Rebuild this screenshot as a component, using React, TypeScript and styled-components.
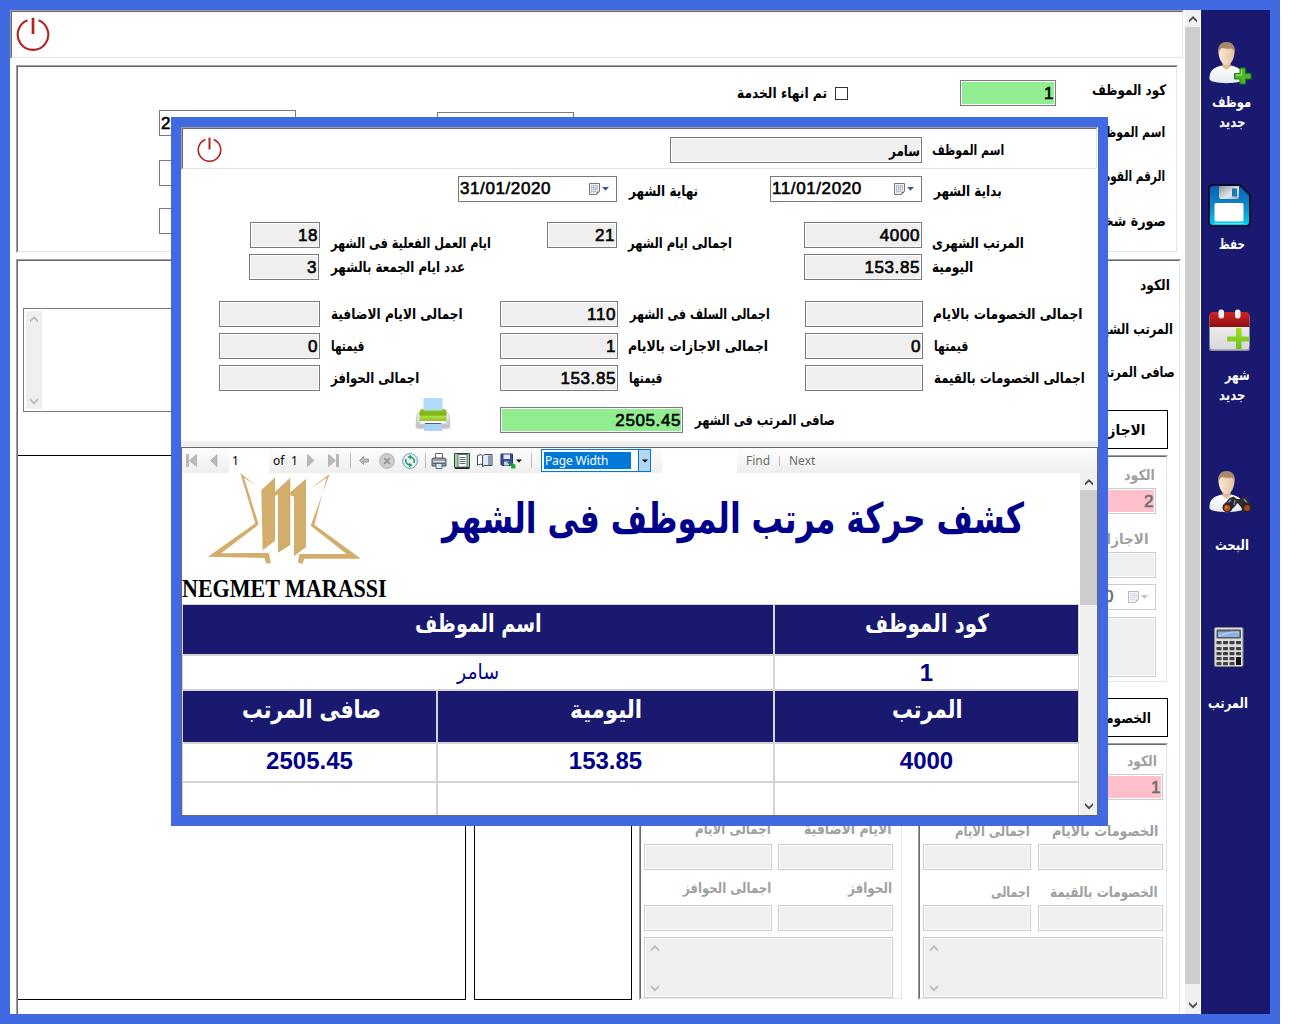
import React, { useLayoutEffect, useRef, useState } from "react";
import styled, { createGlobalStyle, css } from "styled-components";

const ARABIC = '"DejaVu Sans Condensed", "DejaVu Sans", sans-serif';
const LATIN = '"Liberation Sans", "DejaVu Sans", sans-serif';
const ROYAL = "#4169e1";
const NAVY = "#191970";

const Global = createGlobalStyle`
  * { box-sizing: border-box; }
  body { margin: 0; background: #fff; overflow: hidden; font-family: ${LATIN}; }
  svg { display: block; flex: none; }
`;

/* ---------- text ---------- */

const TextSlot = styled.div<{ $w: number; $ml?: number; $mr?: number; $dy?: number; $h?: number; $size?: number; $color?: string; $weight?: number; $font?: string }>`
  flex: none;
  width: ${(p) => p.$w}px;
  height: ${(p) => p.$h ?? 24}px;
  margin-left: ${(p) => p.$ml ?? 0}px;
  margin-right: ${(p) => p.$mr ?? 0}px;
  margin-top: ${(p) => (p.$dy ?? 0) * 2}px;
  font: ${(p) => p.$weight ?? 700} ${(p) => p.$size ?? 14.5}px / ${(p) => p.$h ?? 24}px ${(p) => p.$font ?? ARABIC};
  letter-spacing: 0;
  -webkit-text-stroke: 0;
  color: ${(p) => p.$color ?? "#000"};
  text-align: left;
`;

const FitSpan = styled.span`
  display: inline-block;
  white-space: nowrap;
  transform-origin: 0 50%;
`;

type FitProps = { children: string; w: number; ml?: number; mr?: number; dy?: number; h?: number; size?: number; color?: string; weight?: number; font?: string; ltr?: boolean };

function Fit({ children, w, ml, mr, dy, h, size, color, weight, font, ltr }: FitProps) {
  const ref = useRef<HTMLSpanElement>(null);
  const [scale, setScale] = useState(1);
  useLayoutEffect(() => {
    if (ref.current) setScale(w / ref.current.offsetWidth);
  }, [w, children]);
  return (
    <TextSlot $w={w} $ml={ml} $mr={mr} $dy={dy} $h={h} $size={size} $color={color} $weight={weight} $font={font}>
      <FitSpan ref={ref} dir={ltr ? "ltr" : "rtl"} style={{ transform: `scaleX(${scale})` }}>
        {children}
      </FitSpan>
    </TextSlot>
  );
}

/* ---------- layout pieces ---------- */

const Row = styled.div<{ $h?: number; $mt?: number; $pl?: number; $pr?: number; $end?: boolean }>`
  display: flex;
  flex: none;
  align-items: center;
  justify-content: ${(p) => (p.$end ? "flex-end" : "flex-start")};
  height: ${(p) => p.$h ?? 26}px;
  margin-top: ${(p) => p.$mt ?? 0}px;
  padding-left: ${(p) => p.$pl ?? 0}px;
  padding-right: ${(p) => p.$pr ?? 0}px;
`;

const sunken = css`
  border: 1px solid;
  border-color: #a0a0a0 #fff #fff #a0a0a0;
`;

const SunkenOuter = styled.div<{ $w?: number; $h?: number; $ml?: number; $mt?: number; $mr?: number }>`
  ${sunken}
  flex: none;
  display: flex;
  width: ${(p) => (p.$w ? p.$w + "px" : "auto")};
  height: ${(p) => (p.$h ? p.$h + "px" : "auto")};
  margin: ${(p) => p.$mt ?? 0}px ${(p) => p.$mr ?? 0}px 0 ${(p) => p.$ml ?? 0}px;
`;

const SunkenInner = styled.div<{ $dir?: string }>`
  flex: 1;
  min-width: 0;
  display: flex;
  flex-direction: ${(p) => p.$dir ?? "column"};
  border: 1px solid;
  border-color: #696969 #e3e3e3 #e3e3e3 #696969;
`;

type SunkenProps = { w?: number; h?: number; ml?: number; mt?: number; mr?: number; dir?: string; children?: React.ReactNode };
const Sunken = ({ w, h, ml, mt, mr, dir, children }: SunkenProps) => (
  <SunkenOuter $w={w} $h={h} $ml={ml} $mt={mt} $mr={mr}>
    <SunkenInner $dir={dir}>{children}</SunkenInner>
  </SunkenOuter>
);

const tones: Record<string, string> = { grey: "#efefef", green: "#90ee90", pink: "#ffc0cb", white: "#fff" };

const Field = styled.div<{ $w: number; $h?: number; $ml?: number; $tone?: string; $off?: boolean; $left?: boolean }>`
  flex: none;
  display: flex;
  align-items: center;
  justify-content: ${(p) => (p.$left ? "flex-start" : "flex-end")};
  width: ${(p) => p.$w}px;
  height: ${(p) => p.$h ?? 26}px;
  margin-left: ${(p) => p.$ml ?? 0}px;
  padding: 1px 1px 0;
  border: 1px solid ${(p) => (p.$off ? "#cccccc" : "#7a7a7a")};
  box-shadow: inset 0 0 0 1px #fff;
  background: ${(p) => tones[p.$tone ?? "grey"]};
  color: ${(p) => (p.$off ? "#6d6d6d" : "#000")};
  font: 400 17px/24px ${LATIN};
  letter-spacing: 0.6px;
  -webkit-text-stroke: 0.6px currentColor;
`;

const DateField = styled(Field)`
  justify-content: space-between;
  padding: 0 6px 0 1px;
`;

const Calendar = ({ off }: { off?: boolean }) => (
  <svg width="22" height="14" viewBox="0 0 22 14" opacity={off ? 0.5 : 1}>
    <path d="M1.500 1.500h10v8l-3 3h-7z" fill="#f4f4f8" stroke="#7d7478" />
    <path d="M3 3.500h7M3 5.500h7M3 7.500h7M3 9.500h5M3.500 3v8M5.500 3v8M7.500 3v7M9.500 3v5" stroke="#b3b9cc" strokeWidth=".8" />
    <path d="M8.500 12.500l3-3h-3z" fill="#7d7478" />
    <path d="M14 5h7l-3.500 3.700z" fill={off ? "#888880" : "#44598c"} />
  </svg>
);

const DateBox = ({ value, w, ml, off }: { value: string; w: number; ml?: number; off?: boolean }) => (
  <DateField $w={w} $ml={ml} $tone="white" $off={off}>
    <span>{value}</span>
    <Calendar off={off} />
  </DateField>
);

/* ---------- scrollbars ---------- */

const Chevron = ({ down, color = "#505050" }: { down?: boolean; color?: string }) => (
  <svg width="8" height="7" viewBox="0 0 8 7">
    <path d={down ? "M0 0v2.500L4 6.500 8 2.500V0L4 3.800z" : "M0 6.500V4l4-4 4 4v2.500L4 2.700z"} fill={color} />
  </svg>
);

const Track = styled.div<{ $w: number; $bg?: string; $ml?: number; $pad?: string }>`
  flex: none;
  display: flex;
  flex-direction: column;
  align-items: center;
  justify-content: space-between;
  width: ${(p) => p.$w}px;
  margin-left: ${(p) => p.$ml ?? 0}px;
  padding: ${(p) => p.$pad ?? "6px 0 5px"};
  background: ${(p) => p.$bg ?? "#f0f0f0"};
`;

const Thumb = styled.div<{ $h: number }>`
  width: 100%;
  height: ${(p) => p.$h}px;
  margin: 4px 0 auto;
  background: #cdcdcd;
`;

const Memo = styled(Field)<{ $mt?: number }>`
  align-items: stretch;
  justify-content: flex-start;
  margin-top: ${(p) => p.$mt ?? 0}px;
  padding: 2px;
`;

/* ---------- window ---------- */

const Stage = styled.div`
  position: relative;
  width: 1302px;
  height: 1024px;
  overflow: hidden;
  background: #fff;
`;

const Window = styled.div`
  display: flex;
  width: 1280px;
  height: 1024px;
  border: 10px solid ${ROYAL};
`;

const Page = styled.div`
  width: 1175px;
  flex: none;
  overflow: hidden;
  display: flex;
  flex-direction: column;
  background: #fff;
`;

const Sidebar = styled.div`
  width: 69px;
  margin-left: 1px;
  background: ${NAVY};
  display: flex;
  flex-direction: column;
`;

const SideItem = styled.div<{ $mt: number; $pl: number }>`
  display: flex;
  flex-direction: column;
  align-items: flex-start;
  margin-top: ${(p) => p.$mt}px;
  padding-left: ${(p) => p.$pl}px;
`;

const Check = styled.div`
  flex: none;
  width: 13px;
  height: 13px;
  margin-left: 8px;
  border: 1px solid #333;
  background: #fff;
`;

const Columns = styled.div`
  display: flex;
  flex: none;
`;

const Column = styled.div<{ $w: number; $ml?: number }>`
  flex: none;
  display: flex;
  flex-direction: column;
  width: ${(p) => p.$w}px;
  margin-left: ${(p) => p.$ml ?? 0}px;
`;

const ListBox = styled.div<{ $w: number; $ml?: number; $open?: boolean }>`
  width: ${(p) => p.$w}px;
  height: 545px;
  margin-left: ${(p) => p.$ml ?? 0}px;
  border: 1px solid #000;
  border-left-width: ${(p) => (p.$open ? 0 : 1)}px;
`;

const TabBox = styled.div<{ $mt: number; $pr: number }>`
  flex: none;
  display: flex;
  align-items: center;
  justify-content: flex-end;
  height: 39px;
  margin: ${(p) => p.$mt}px 11px 0 100px;
  padding-right: ${(p) => p.$pr}px;
  border: 1px solid #000;
`;

const PowerSvg = styled.svg<{ $ml: number; $mt: number }>`
  margin: ${(p) => p.$mt}px 0 0 ${(p) => p.$ml}px;
`;

const Power = ({ s, sw, ml, mt }: { s: number; sw: number; ml: number; mt: number }) => (
  <PowerSvg width={s} height={s} viewBox="0 0 34 34" $ml={ml} $mt={mt}>
    <path d="M11.500 3.300A15.300 15.300 0 1 0 22.500 3.300" fill="none" stroke="#b22222" strokeWidth={sw} />
    <path d="M17 .8v16.200" stroke="#b22222" strokeWidth={sw + 0.6} />
  </PowerSvg>
);

/* ---------- sidebar drawings ---------- */

const Person = () => (
  <>
    <defs>
      <linearGradient id="skin" x1="0" x2="1"><stop offset="0" stopColor="#fbe9d3" /><stop offset="1" stopColor="#e5c19f" /></linearGradient>
      <linearGradient id="shirt" x1="0" y1="0" x2="0" y2="1"><stop offset="0" stopColor="#fff" /><stop offset="1" stopColor="#e6ebf2" /></linearGradient>
    </defs>
    <path d="M0.500 37c0-8 3-11 12-13.500l5 3 5-3C31 26 35 29 35 37c0 5.500-34.500 5.500-34.500 0z" fill="url(#shirt)" />
    <path d="M13.500 20h8v5l-4 3-4-3z" fill="#dfbd9c" />
    <path d="M9.500 9c0-5 3-8 8-8s8 3 8 8c0 8-3.500 14-8 14s-8-6-8-14z" fill="url(#skin)" />
    <path d="M9.500 12C8 4.500 11.500 0 17.500 0S27 4.500 25.500 12C25.300 9 24.500 7 22.500 6.500c-4 .5-7 .3-9.500-.5-2 1-3 3-3.500 6z" fill="#a88a6a" />
  </>
);

const AddUser = () => (
  <svg width="43" height="43" viewBox="0 0 43 43">
    <Person />
    <path d="M31 26h5.500v5.500H42V37h-5.500v5H31v-5h-5.500v-5.500H31z" fill="#48b52a" stroke="#1f7d10" />
    <path d="M32.500 27.500v5.500h-5.500" fill="none" stroke="#8be36a" strokeWidth="1.300" />
  </svg>
);

const FindUser = () => (
  <svg width="43" height="43" viewBox="0 0 43 43">
    <Person />
    <path d="M14 35l6.500-8 4-1.500 3.500 2.500h3l3-2.500 3.500 1 5 9-5 5-6-5-3-3.500-3 4-6 4.500z" fill="#2d2c30" />
    <path d="M22 28.500l-4 4.500M35 28l4 5M26 29l-1 5" stroke="#88868c" strokeWidth="1.300" />
    <circle cx="18.500" cy="36.500" r="5" fill="#27252a" /><circle cx="18" cy="37" r="3.200" fill="#b34a16" />
    <circle cx="37.500" cy="36.500" r="5" fill="#27252a" /><circle cx="38" cy="37" r="3" fill="#a34516" />
    <circle cx="17.500" cy="36.500" r="1.200" fill="#e08a4a" />
  </svg>
);

const Floppy = () => (
  <svg width="44" height="44" viewBox="0 0 44 44">
    <defs>
      <linearGradient id="disk" x1="0" y1="0" x2="0" y2="1"><stop offset="0" stopColor="#0a5bb8" /><stop offset=".55" stopColor="#0a8ccb" /><stop offset="1" stopColor="#00d4ee" /></linearGradient>
      <linearGradient id="shutter" x1="0" x2="1" y2="1"><stop offset="0" stopColor="#8b9298" /><stop offset=".6" stopColor="#e4e8ea" /><stop offset="1" stopColor="#a3abb0" /></linearGradient>
    </defs>
    <path d="M5 1h27l10 10v27q0 4-4 4H5q-4 0-4-4V5q0-4 4-4z" fill="url(#disk)" stroke="#04102e" strokeWidth="2" />
    <path d="M11 2h20v11q0 2-2 2H13q-2 0-2-2z" fill="url(#shutter)" />
    <path d="M24 4.500h5v8h-5z" fill="#127fa8" />
    <rect x="6.500" y="19" width="29" height="18.500" rx="1.500" fill="#fff" />
    <path d="M6 39.500h30" stroke="#7af5ff" opacity=".7" />
  </svg>
);

const MonthAdd = () => (
  <svg width="42" height="43" viewBox="0 0 42 43">
    <defs>
      <linearGradient id="red" x1="0" y1="0" x2="0" y2="1"><stop offset="0" stopColor="#cf2524" /><stop offset="1" stopColor="#8d0e10" /></linearGradient>
      <linearGradient id="paper" x1="0" y1="0" x2="0" y2="1"><stop offset="0" stopColor="#f8f8f8" /><stop offset="1" stopColor="#d8d8d8" /></linearGradient>
      <linearGradient id="lime" x1="0" y1="0" x2="0" y2="1"><stop offset="0" stopColor="#a5df1b" /><stop offset="1" stopColor="#6cc026" /></linearGradient>
    </defs>
    <rect x="0" y="38" width="41" height="4" rx="2" fill="#8b8ba4" />
    <rect x="0.500" y="4" width="40" height="36.500" rx="4" fill="url(#paper)" />
    <path d="M.5 18V7q0-4 4-4h32q4 0 4 4v11z" fill="url(#red)" />
    <rect x="9.500" y="0.500" width="5.500" height="9" rx="2.500" fill="#f1f1f1" />
    <rect x="26" y="0.500" width="5.500" height="9" rx="2.500" fill="#f1f1f1" />
    <path d="M28 19h3.500q1 0 1 1v7.500h7q1 0 1 1v3q0 1-1 1h-7V40h-5.500v-7.500H19q-1 0-1-1v-3q0-1 1-1h8V20q0-1 1-1z" fill="url(#lime)" />
  </svg>
);

const Calculator = () => (
  <svg width="30" height="41" viewBox="0 0 30 41">
    <rect x=".5" y=".5" width="28.500" height="39" rx="1.500" fill="#dcdcd8" stroke="#86868a" />
    <rect x="2.500" y="2.500" width="24.500" height="9" rx="1" fill="#555960" />
    <path d="M4 4.500h21.500V10H4z" fill="#8fb0e4" />
    <path d="M5 9l12-4h8" stroke="#c4d8f6" fill="none" />
    {[14, 20, 25, 30, 35].map((y) =>
      [2.5, 9, 15.5, 22].map((x, i) =>
        i === 3 && y === 35 ? null : <rect key={x + "-" + y} x={x} y={y} width="5" height={i === 3 && y === 30 ? 8 : 3.2} rx=".6" fill={i === 3 && y >= 30 ? "#151517" : "#424246"} />
      )
    )}
  </svg>
);

const SideLabel = (p: { children: string; w: number; ml: number }) => (
  <Fit w={p.w} ml={p.ml} color="#fff" h={20}>
    {p.children}
  </Fit>
);

const Gap = styled.div<{ $h: number }>`
  flex: none;
  height: ${(p) => p.$h}px;
`;

/* ---------- background page ---------- */

const GREY = "#a0a0a0";

function DisabledGroup({ code, labels, sums, cols }: {
  code?: boolean;
  labels: [number, number, number, number];
  sums: { t: string; w: number; ml: number }[][];
  cols: { lead: number; a: number; gap: number; b: number; total: number };
}) {
  return (
    <>
      {code && (
        <>
          <Row $h={24} $mt={4} $end $pr={9}>
            <Fit w={30} color={GREY}>الكود</Fit>
          </Row>
          <Row $mt={1} $end $pr={3}>
            <Field $w={125} $tone="pink" $off>1</Field>
          </Row>
        </>
      )}
      {sums.map((row, i) => (
        <React.Fragment key={i}>
          <Row $h={24} $mt={labels[i * 2]}>
            {row.map((l) => <Fit key={l.t} w={l.w} ml={l.ml} color={GREY}>{l.t}</Fit>)}
          </Row>
          <Row $mt={labels[i * 2 + 1]} $pl={cols.lead}>
            <Field $w={cols.a} $off />
            <Field $w={cols.b} $ml={cols.gap} $off />
          </Row>
        </React.Fragment>
      ))}
      <Memo $w={cols.total} $h={61} $ml={cols.lead} $mt={6} $off>
        <Track $w={15} $bg="#efefef" $pad="5px 0 3px">
          <Chevron color="#bcbcbc" />
          <Chevron down color="#bcbcbc" />
        </Track>
      </Memo>
    </>
  );
}

const EmployeePanel = () => (
  <Sunken w={1162} h={188} ml={6} mt={6} dir="row">
    <Column $w={700}>
      <Row $mt={43} $pl={141}>
        <Field $w={137} $tone="white" $left>2</Field>
        <Row $mt={4} $pl={141}><Field $w={137} $tone="white" /></Row>
      </Row>
      <Row $mt={24} $pl={141}><Field $w={137} $tone="white" /></Row>
      <Row $mt={22} $pl={141}><Field $w={137} $tone="white" /></Row>
    </Column>
    <Column $w={458}>
      <Row $mt={13} $pl={19}>
        <Fit w={90}>تم انهاء الخدمة</Fit>
        <Check />
        <Field $w={96} $ml={112} $tone="green">1</Field>
        <Fit w={74} ml={36} dy={-3}>كود الموظف</Fit>
      </Row>
      <Row $h={24} $mt={14} $end $pr={11}><Fit w={72}>اسم الموظف</Fit></Row>
      <Row $h={24} $mt={20} $end $pr={11}><Fit w={72}>الرقم القومى</Fit></Row>
      <Row $h={24} $mt={21} $end $pr={10}><Fit w={87}>صورة شخصية</Fit></Row>
    </Column>
  </Sunken>
);

const MonthPanel = () => (
  <Sunken w={1165} h={780} ml={6} mt={6} dir="row">
    <Column $w={614}>
      <Memo $w={500} $h={104} $ml={5} $mt={47} $tone="white">
        <Track $w={16} $bg="#efefef" $pad="5px 0 4px">
          <Chevron color="#bcbcbc" />
          <Chevron down color="#bcbcbc" />
        </Track>
      </Memo>
      <Gap $h={43} />
      <Columns>
        <ListBox $w={448} $open />
        <ListBox $w={158} $ml={8} />
      </Columns>
    </Column>
    <Column $w={264} $ml={7}>
      <Gap $h={482} />
      <Sunken w={264} h={257}>
        <DisabledGroup
          labels={[72, 3, 6, 5]}
          cols={{ lead: 3, a: 128, gap: 6, b: 115, total: 249 }}
          sums={[
            [{ t: "اجمالى الايام", w: 76, ml: 54 }, { t: "الايام الاضافية", w: 88, ml: 33 }],
            [{ t: "اجمالى الحوافز", w: 88, ml: 42 }, { t: "الحوافز", w: 44, ml: 77 }],
          ]}
        />
      </Sunken>
    </Column>
    <Column $w={261} $ml={15}>
      <Row $h={24} $mt={12} $end $pr={9}><Fit w={30}>الكود</Fit></Row>
      <Row $h={24} $mt={20} $end $pr={6}><Fit w={89}>المرتب الشهرى</Fit></Row>
      <Row $h={24} $mt={19} $end $pr={4}><Fit w={77}>صافى المرتب</Fit></Row>
      <TabBox $mt={26} $pr={21}><Fit w={57}>الاجازات</Fit></TabBox>
      <Sunken h={228} mt={6} mr={11}>
        <Row $h={24} $mt={6} $end $pr={11}><Fit w={31} color={GREY}>الكود</Fit></Row>
        <Row $mt={1} $end $pr={10}><Field $w={125} $tone="pink" $off>2</Field></Row>
        <Row $h={24} $mt={13} $end $pr={17}><Fit w={56} color={GREY}>الاجازات</Fit></Row>
        <Row $mt={1} $end $pr={10}><Field $w={125} $off /></Row>
        <Row $mt={6} $end $pr={10}><DateBox w={135} value="31/01/2020" off /></Row>
        <Row $h={60} $mt={7} $end $pr={10}><Field $w={190} $h={60} $off /></Row>
      </Sunken>
      <TabBox $mt={15} $pr={16}><Fit w={62}>الخصومات</Fit></TabBox>
      <Sunken h={257} mt={6} mr={11}>
        <DisabledGroup
          code
          labels={[19, 1, 10, 1]}
          cols={{ lead: 3, a: 108, gap: 7, b: 125, total: 240 }}
          sums={[
            [{ t: "اجمالى الايام", w: 75, ml: 35 }, { t: "الخصومات بالايام", w: 106, ml: 22 }],
            [{ t: "اجمالى", w: 39, ml: 71 }, { t: "الخصومات بالقيمة", w: 108, ml: 20 }],
          ]}
        />
      </Sunken>
    </Column>
  </Sunken>
);

/* ---------- salary dialog ---------- */

const Dialog = styled.div`
  position: absolute;
  left: 171px;
  top: 117px;
  width: 937px;
  height: 709px;
  border: 10px solid ${ROYAL};
  background: #fff;
  display: flex;
  flex-direction: column;
`;

const Splitter = styled.div`
  flex: none;
  height: 6px;
  margin-top: 8px;
  background: #efefef;
`;

const Viewer = styled.div`
  flex: 1;
  min-height: 0;
  border: 1px solid #696969;
  display: flex;
  flex-direction: column;
`;

const Toolbar = styled.div`
  flex: none;
  display: flex;
  align-items: center;
  height: 25px;
  background: linear-gradient(#fdfdfd, #eeeeee);
  font: 400 12px/24px "Noto Sans", "Open Sans", sans-serif;
  color: #000;
`;

const Slot = styled.div<{ $w: number; $ml?: number; $bg?: string; $color?: string; $pl?: number }>`
  flex: none;
  width: ${(p) => p.$w}px;
  height: 24px;
  margin-left: ${(p) => p.$ml ?? 0}px;
  padding-left: ${(p) => p.$pl ?? 0}px;
  background: ${(p) => p.$bg ?? "transparent"};
  color: ${(p) => p.$color ?? "#000"};
  display: flex;
  align-items: center;
  white-space: nowrap;
`;

const Sep = styled.div<{ $ml: number; $h?: number }>`
  flex: none;
  width: 1px;
  height: ${(p) => p.$h ?? 15}px;
  margin-left: ${(p) => p.$ml}px;
  background: #bdbdbd;
`;

const Combo = styled.div`
  flex: none;
  display: flex;
  width: 110px;
  height: 23px;
  margin-left: 9px;
  border: 1px solid #0078d7;
  background: #fff;
`;

const ComboText = styled.div`
  width: 87px;
  height: 17px;
  margin: 2px 7px 0 2px;
  padding-left: 1px;
  background: #0078d7;
  color: #fff;
  line-height: 17px;
  white-space: nowrap;
  letter-spacing: -0.15px;
`;

const ComboArrow = styled.div`
  flex: 1;
  display: flex;
  align-items: center;
  justify-content: center;
  border-left: 1px solid #0078d7;
  background: #b3d6f2;
`;

const Caret = () => (
  <svg width="6" height="4" viewBox="0 0 6 4"><path d="M0 .5h6L3 3.500z" fill="#000" /></svg>
);

const ReportArea = styled.div`
  flex: 1;
  min-height: 0;
  display: flex;
`;

const Report = styled.div`
  flex: none;
  width: 897px;
  overflow: hidden;
  display: flex;
  flex-direction: column;
`;

const ReportHead = styled.div`
  flex: none;
  display: flex;
  height: 131px;
`;

const Brand = styled.div`
  flex: none;
  width: 207px;
`;

const Grid = styled.div`
  flex: none;
  display: grid;
  grid-template-columns: 253px 335px 303px;
  grid-template-rows: 49px 33px 51px 37px 40px;
  gap: 2px;
  padding: 1px 1px 0 1px;
  background: #d3d3d3;
`;

const Cell = styled.div<{ $head?: boolean; $span?: number }>`
  grid-column: span ${(p) => p.$span ?? 1};
  display: flex;
  justify-content: center;
  align-items: flex-start;
  background: ${(p) => (p.$head ? NAVY : "#fff")};
  color: ${(p) => (p.$head ? "#fff" : "#00008b")};
  font: 700 24px/34px ${LATIN};
`;

const gold = "#d2ad6b";
const Logo = () => (
  <svg width="207" height="96" viewBox="36 99 621 288">
    <g fill={gold}>
      <path d="M274 151L315 112V302L278 331z" />
      <path d="M315 155L361 113V315L324 338V163L315 168z" />
      <path d="M361 157L408 116V321L372 349V170L361 166z" />
    </g>
    <path fill={gold} fillRule="evenodd" d="M211 100L258 136L222 113L265 250L262 257L153 340L296 339L303 369L289 371L284 354L114 350L256 250z" />
    <path fill={gold} fillRule="evenodd" d="M479 102L415 150L470 113L433 254L573 356L403 356L398 371L384 369L388 342L530 342L422 257z" />
  </svg>
);

const FirstIcon = () => <svg width="11" height="13" viewBox="0 0 11 13"><path d="M.5.500h2v12h-2zM10.500.5v12L3.500 6.500z" fill="#b9b9b9" stroke="#a0a0a0" strokeWidth=".6" /></svg>;
const PrevIcon = () => <svg width="8" height="13" viewBox="0 0 8 13"><path d="M7 .5v12L.5 6.500z" fill="#b9b9b9" stroke="#a0a0a0" strokeWidth=".6" /></svg>;
const NextIcon = () => <svg width="8" height="13" viewBox="0 0 8 13"><path d="M.5 .5v12l6.500-6z" fill="#b9b9b9" stroke="#a0a0a0" strokeWidth=".6" /></svg>;
const LastIcon = () => <svg width="11" height="13" viewBox="0 0 11 13"><path d="M8.500.5h2v12h-2zM.5.500v12l7-6z" fill="#b9b9b9" stroke="#a0a0a0" strokeWidth=".6" /></svg>;
const BackIcon = () => <svg width="10" height="9" viewBox="0 0 10 9"><path d="M4.500.5v2.500h5v3h-5v2.500L.5 4.500z" fill="#bdbdbd" stroke="#969696" strokeWidth=".8" /></svg>;
const StopIcon = () => (
  <svg width="16" height="16" viewBox="0 0 16 16"><circle cx="8" cy="8" r="7.400" fill="#cdcdcd" stroke="#b3b3b3" /><path d="M5.200 5.200l5.600 5.600M10.800 5.200l-5.600 5.600" stroke="#959595" strokeWidth="1.800" /></svg>
);
const RefreshIcon = () => (
  <svg width="16" height="16" viewBox="0 0 16 16"><circle cx="8" cy="8" r="7.400" fill="#e4f0fb" stroke="#6d9bd0" /><path d="M12 10c1-3-.5-5.500-3.500-6M4 6c-1 3 .5 5.500 3.500 6" fill="none" stroke="#1f9d3c" strokeWidth="1.500" /><path d="M9 1.800v4.500L5.500 4zM7 14.200V9.700l3.500 2.300z" fill="#1f9d3c" /></svg>
);
const PrintIcon = () => (
  <svg width="16" height="16" viewBox="0 0 16 16"><path d="M4.500 .5h7v6h-7z" fill="#fff" stroke="#666" /><path d="M1 6l2-1h10l2 1v7H1z" fill="#9a9ea6" stroke="#50545a" /><path d="M2 8.500h12" stroke="#e2e4e8" /><path d="M2 10.500h12" stroke="#5c6068" /><path d="M5 10.500h6v5H5z" fill="#dfeaf7" stroke="#4d6a90" /></svg>
);
const PageIcon = () => (
  <svg width="16" height="16" viewBox="0 0 16 16"><path d="M.5.500h15v14H.5z" fill="#a9cf9a" stroke="#1f5135" /><path d="M4 1.500h9v12.500H4z" fill="#fff" stroke="#3d4560" strokeWidth=".8" /><path d="M5.500 4.500h6M5.500 6.500h6M5.500 8.500h6M5.500 10.500h6" stroke="#4c5878" strokeWidth=".9" /><path d="M1 15.500h14.500" stroke="#222" /></svg>
);
const BookIcon = () => (
  <svg width="16" height="15" viewBox="0 0 16 15"><path d="M.5 2.500l3.500-1 1.500 1.500v9l-1.500-1-3.500 1z" fill="#fff" stroke="#444a5c" /><path d="M5.500 3l2-1.500H15v11H7.500L5.500 13.500z" fill="#e3e8f2" stroke="#3d4760" /><path d="M11 2.500v9.500h3.500V2.500z" fill="#8b9ab8" /></svg>
);
const SaveIcon = () => (
  <svg width="16" height="16" viewBox="0 0 16 16"><path d="M1 1h11.500v11.500H2L1 11.500z" fill="#3a4a9c" stroke="#27326f" /><path d="M3.500 1.500h6.500v4.500H3.500z" fill="#e5e9f4" /><path d="M4 8.500h5v4H4z" fill="#c9cfe0" /><path d="M8 8.500l3.500 3.500V9.200L15.500 12v3.500h-5l1.200-1.500L7 10z" fill="#21a336" /></svg>
);
const BigPrinter = () => (
  <svg width="38" height="35" viewBox="0 0 38 35">
    <defs>
      <linearGradient id="tray" x1="0" y1="0" x2="0" y2="1"><stop offset="0" stopColor="#8fbf22" /><stop offset=".5" stopColor="#80b014" /><stop offset=".6" stopColor="#b0de48" /><stop offset="1" stopColor="#90c326" /></linearGradient>
      <linearGradient id="body" x1="0" y1="0" x2="0" y2="1"><stop offset="0" stopColor="#fafafa" /><stop offset="1" stopColor="#b9bcbe" /></linearGradient>
    </defs>
    <ellipse cx="19" cy="30" rx="18.500" ry="1.500" fill="#d4d4d4" />
    <path d="M3 17q0-2 3-2h26q3 0 3 2l1 10q0 2.500-3 2.500H5q-3 0-3-2.500z" fill="url(#body)" stroke="#c3c5c7" />
    <path d="M5.500 13q1-2 3-2h21q2 0 3 2v10h-27z" fill="url(#tray)" />
    <path d="M9.500 0h19v12.500h-19z" fill="#b5dbfa" />
    <path d="M7 23h24l1 2.500H6z" fill="#fff" />
    <path d="M11.500 26h15l2 7h-19z" fill="#a9d4f8" />
    <path d="M11 25.500h16" stroke="#53616c" />
  </svg>
);

const PushRight = styled.div<{ $ml: number }>`
  flex: none;
  margin-left: ${(p) => p.$ml}px;
`;

const SalaryForm = () => (
  <>
    <Sunken h={43} dir="row">
      <Power s={25} sw={2.1} ml={14} mt={8} />
      <Row $mt={8} $pl={448}>
        <Field $w={252}><Fit w={31}>سامر</Fit></Field>
        <Fit w={72} ml={10}>اسم الموظف</Fit>
      </Row>
    </Sunken>
    <Row $mt={6} $pl={277}>
      <DateBox w={159} value="31/01/2020" />
      <Fit w={69} ml={12} dy={2}>نهاية الشهر</Fit>
      <DateBox w={152} ml={72} value="11/01/2020" />
      <Fit w={68} ml={12} dy={2}>بداية الشهر</Fit>
    </Row>
    <Row $mt={20} $pl={69}>
      <Field $w={70}>18</Field>
      <Fit w={160} ml={11} dy={8}>ايام العمل الفعلية فى الشهر</Fit>
      <Field $w={70} $ml={56}>21</Field>
      <Fit w={104} ml={11} dy={8}>اجمالى ايام الشهر</Fit>
      <Field $w={118} $ml={72}>4000</Field>
      <Fit w={92} ml={10} dy={8}>المرتب الشهرى</Fit>
    </Row>
    <Row $mt={6} $pl={68}>
      <Field $w={70}>3</Field>
      <Fit w={134} ml={12}>عدد ايام الجمعة بالشهر</Fit>
      <Field $w={118} $ml={339}>153.85</Field>
      <Fit w={41} ml={10}>اليومية</Fit>
    </Row>
    <Row $mt={21} $pl={38}>
      <Field $w={101} />
      <Fit w={132} ml={11}>اجمالى الايام الاضافية</Fit>
      <Field $w={118} $ml={37}>110</Field>
      <Fit w={140} ml={12}>اجمالى السلف فى الشهر</Fit>
      <Field $w={118} $ml={35} />
      <Fit w={149} ml={10}>اجمالى الخصومات بالايام</Fit>
    </Row>
    <Row $mt={6} $pl={38}>
      <Field $w={101}>0</Field>
      <Fit w={33} ml={11}>قيمتها</Fit>
      <Field $w={118} $ml={136}>1</Field>
      <Fit w={140} ml={10}>اجمالى الاجازات بالايام</Fit>
      <Field $w={118} $ml={37}>0</Field>
      <Fit w={34} ml={11}>قيمتها</Fit>
    </Row>
    <Row $mt={6} $pl={38}>
      <Field $w={101} />
      <Fit w={88} ml={11}>اجمالى الحوافز</Fit>
      <Field $w={118} $ml={81}>153.85</Field>
      <Fit w={33} ml={11}>قيمتها</Fit>
      <Field $w={118} $ml={143} />
      <Fit w={151} ml={11}>اجمالى الخصومات بالقيمة</Fit>
    </Row>
    <Row $mt={6} $h={36} $pl={233}>
      <BigPrinter />
      <PushRight $ml={48}>
        <Row $mt={10}>
          <Field $w={183} $tone="green">2505.45</Field>
          <Fit w={140} ml={12}>صافى المرتب فى الشهر</Fit>
        </Row>
      </PushRight>
    </Row>
  </>
);

const ViewerToolbar = () => (
  <Toolbar>
    <Slot $w={11} $ml={4}><FirstIcon /></Slot>
    <Slot $w={8} $ml={13}><PrevIcon /></Slot>
    <Slot $w={40} $ml={11} $bg="#fff" $pl={3}>1</Slot>
    <Slot $w={14} $ml={4}>of</Slot>
    <Slot $w={10} $ml={4}>1</Slot>
    <Slot $w={8} $ml={6}><NextIcon /></Slot>
    <Slot $w={11} $ml={13}><LastIcon /></Slot>
    <Sep $ml={11} />
    <Slot $w={10} $ml={8}><BackIcon /></Slot>
    <Slot $w={16} $ml={10}><StopIcon /></Slot>
    <Slot $w={16} $ml={7}><RefreshIcon /></Slot>
    <Sep $ml={7} />
    <Slot $w={16} $ml={5}><PrintIcon /></Slot>
    <Slot $w={16} $ml={7}><PageIcon /></Slot>
    <Slot $w={16} $ml={7}><BookIcon /></Slot>
    <Slot $w={16} $ml={7}><SaveIcon /></Slot>
    <Slot $w={6} $ml={0}><Caret /></Slot>
    <Sep $ml={9} />
    <Combo>
      <ComboText>Page Width</ComboText>
      <ComboArrow><Caret /></ComboArrow>
    </Combo>
    <Slot $w={75} $ml={11} $bg="#fff" />
    <Slot $w={25} $ml={9} $color="#6d6d6d">Find</Slot>
    <Sep $ml={8} $h={10} />
    <Slot $w={27} $ml={9} $color="#6d6d6d">Next</Slot>
  </Toolbar>
);

const SalaryReport = () => (
  <ReportArea>
    <Report>
      <ReportHead>
        <Brand>
          <Logo />
          <Fit ltr w={205} h={39} size={24.5} weight={700} font='"Liberation Serif", serif'>NEGMET MARASSI</Fit>
        </Brand>
        <Fit w={582} ml={53} h={92} size={42} color="#00008b" font='"DejaVu Sans", sans-serif'>كشف حركة مرتب الموظف فى الشهر</Fit>
      </ReportHead>
      <Grid>
        <Cell $head $span={2}><Fit w={127} h={38} size={25} color="#fff">اسم الموظف</Fit></Cell>
        <Cell $head><Fit w={124} h={38} size={25} color="#fff">كود الموظف</Fit></Cell>
        <Cell $span={2}><Fit w={42} h={32} size={21} weight={400} color="#00008b">سامر</Fit></Cell>
        <Cell>1</Cell>
        <Cell $head><Fit w={139} h={38} ml={3} size={25} color="#fff">صافى المرتب</Fit></Cell>
        <Cell $head><Fit w={72} h={38} ml={1} size={25} color="#fff">اليومية</Fit></Cell>
        <Cell $head><Fit w={70} h={38} size={25} color="#fff">المرتب</Fit></Cell>
        <Cell>2505.45</Cell>
        <Cell>153.85</Cell>
        <Cell>4000</Cell>
        <Cell /><Cell /><Cell />
      </Grid>
    </Report>
    <Track $w={17} $ml={1}>
      <Chevron />
      <Thumb $h={115} />
      <Chevron down />
    </Track>
  </ReportArea>
);

export default function App() {
  return (
    <Stage>
      <Global />
      <Window>
        <Page>
          <Sunken w={1174} h={49} dir="row">
            <Power s={34} sw={2.1} ml={4} mt={5} />
          </Sunken>
          <EmployeePanel />
          <MonthPanel />
        </Page>
        <Track $w={15}>
          <Chevron />
          <Thumb $h={957} />
          <Chevron down />
        </Track>
        <Sidebar>
          <SideItem $mt={32} $pl={8}>
            <AddUser />
            <Gap $h={7} />
            <SideLabel w={39} ml={3}>موظف</SideLabel>
            <SideLabel w={26} ml={10}>جديد</SideLabel>
          </SideItem>
          <SideItem $mt={52} $pl={7}>
            <Floppy />
            <Gap $h={6} />
            <SideLabel w={26} ml={11}>حفظ</SideLabel>
          </SideItem>
          <SideItem $mt={55} $pl={8}>
            <MonthAdd />
            <Gap $h={13} />
            <SideLabel w={25} ml={16}>شهر</SideLabel>
            <SideLabel w={26} ml={10}>جديد</SideLabel>
          </SideItem>
          <SideItem $mt={66} $pl={8}>
            <FindUser />
            <Gap $h={21} />
            <SideLabel w={34} ml={6}>البحث</SideLabel>
          </SideItem>
          <SideItem $mt={72} $pl={13}>
            <Calculator />
            <Gap $h={25} />
            <SideLabel w={40} ml={-6}>المرتب</SideLabel>
          </SideItem>
        </Sidebar>
      </Window>
      <Dialog>
        <SalaryForm />
        <Splitter />
        <Viewer>
          <ViewerToolbar />
          <SalaryReport />
        </Viewer>
      </Dialog>
    </Stage>
  );
}
